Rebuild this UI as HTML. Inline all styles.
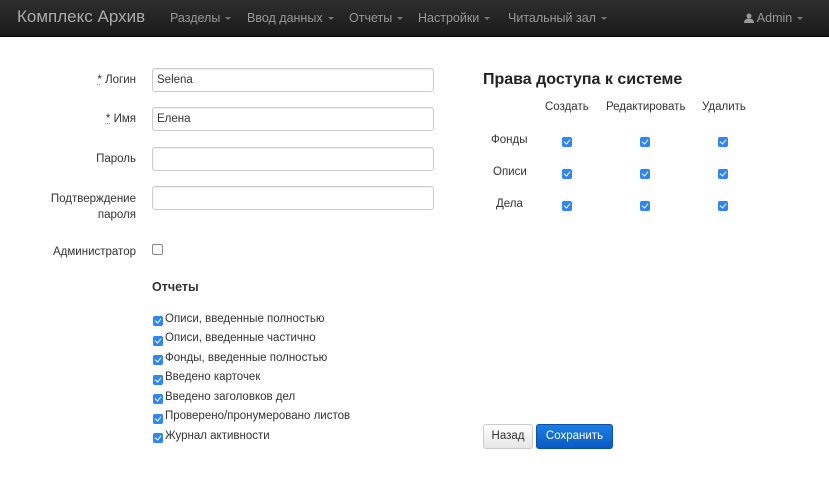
<!DOCTYPE html><html><head><meta charset="utf-8"><style>
body{margin:0;width:829px;height:500px;background:#fff;font-family:"Liberation Sans",sans-serif;font-size:11.5px;color:#333;position:relative;overflow:hidden}
.nav{position:absolute;left:0;top:0;width:829px;height:36px;background:linear-gradient(#2e2e2e,#1a1a1a);border-bottom:1px solid #000}
.nav span{position:absolute;top:11px;color:#999;font-size:12.5px}
.brand{color:#aaa!important;font-size:17px!important;top:7px!important}
.c{display:inline-block;width:0;height:0;border-left:3px solid transparent;border-right:3px solid transparent;border-top:3px solid #777;vertical-align:middle;margin-left:5px}
.a{position:absolute}
.lbl{position:absolute;right:693px;text-align:right;font-size:11.5px;color:#333}
.in{position:absolute;left:152px;width:276px;height:22px;border:1px solid #ccc;border-radius:3px;font-size:11.5px;line-height:22px;padding-left:4px;box-sizing:content-box;box-shadow:inset 0 1px 1px rgba(0,0,0,.08)}
.cb{position:absolute;width:10px;height:10px;border-radius:2px;background:#2f86f0}
.cb::after{content:"";position:absolute;left:3px;top:1px;width:3px;height:5px;border:solid #fff;border-width:0 1.5px 1.5px 0;transform:rotate(40deg)}
.ri{position:absolute;left:165px;font-size:11.5px}
.star{text-decoration:underline dotted #999}
</style></head><body>
<div class="nav">
<span class="brand" style="left:17px">Комплекс Архив</span>
<span style="left:170px">Разделы<i class="c"></i></span>
<span style="left:247px">Ввод данных<i class="c"></i></span>
<span style="left:349px">Отчеты<i class="c"></i></span>
<span style="left:418px">Настройки<i class="c"></i></span>
<span style="left:508px">Читальный зал<i class="c"></i></span>
<span style="left:744px"><svg width="10" height="10" viewBox="0 0 10 10" style="vertical-align:-1px"><circle cx="5" cy="3" r="2.5" fill="#999"/><path d="M0 10 Q0 5.5 5 5.5 Q10 5.5 10 10Z" fill="#999"/></svg> Admin<i class="c"></i></span>
</div>
<div class="lbl" style="top:74px"><span class="star">*</span> Логин</div>
<div class="lbl" style="top:113px"><span class="star">*</span> Имя</div>
<div class="lbl" style="top:153px">Пароль</div>
<div class="lbl" style="top:191px;line-height:16px">Подтверждение<br>пароля</div>
<div class="lbl" style="top:246px">Администратор</div>
<div class="in" style="top:68px">Selena</div>
<div class="in" style="top:107px">Елена</div>
<div class="in" style="top:147px"></div>
<div class="in" style="top:186px"></div>
<div class="a" style="left:152px;top:244px;width:9px;height:9px;border:1px solid #888;border-radius:2px"></div>
<div class="a" style="left:152px;top:280px;font-weight:bold;font-size:12.5px">Отчеты</div>
<div class="cb" style="left:153px;top:316px"></div><div class="ri" style="top:313px">Описи, введенные полностью</div>
<div class="cb" style="left:153px;top:336px"></div><div class="ri" style="top:332px">Описи, введенные частично</div>
<div class="cb" style="left:153px;top:355px"></div><div class="ri" style="top:352px">Фонды, введенные полностью</div>
<div class="cb" style="left:153px;top:375px"></div><div class="ri" style="top:371px">Введено карточек</div>
<div class="cb" style="left:153px;top:394px"></div><div class="ri" style="top:391px">Введено заголовков дел</div>
<div class="cb" style="left:153px;top:414px"></div><div class="ri" style="top:410px">Проверено/пронумеровано листов</div>
<div class="cb" style="left:153px;top:433px"></div><div class="ri" style="top:430px">Журнал активности</div>
<div class="a" style="left:483px;top:71px;font-weight:bold;font-size:16px;color:#222">Права доступа к системе</div>
<div class="a" style="left:545px;top:101px">Создать</div>
<div class="a" style="left:606px;top:101px">Редактировать</div>
<div class="a" style="left:702px;top:101px">Удалить</div>
<div class="a" style="left:491px;top:134px">Фонды</div>
<div class="a" style="left:493px;top:166px">Описи</div>
<div class="a" style="left:496px;top:198px">Дела</div>
<div class="cb" style="left:562px;top:137px"></div><div class="cb" style="left:640px;top:137px"></div><div class="cb" style="left:718px;top:137px"></div>
<div class="cb" style="left:562px;top:169px"></div><div class="cb" style="left:640px;top:169px"></div><div class="cb" style="left:718px;top:169px"></div>
<div class="cb" style="left:562px;top:201px"></div><div class="cb" style="left:640px;top:201px"></div><div class="cb" style="left:718px;top:201px"></div>
<div class="a" style="left:483px;top:424px;width:48px;height:23px;border:1px solid #ccc;border-radius:3px;background:linear-gradient(#fff,#e6e6e6);text-align:center;line-height:23px">Назад</div>
<div class="a" style="left:536px;top:424px;width:75px;height:23px;border:1px solid #0c4fa8;border-radius:3px;background:linear-gradient(#1b7fe0,#0a5ac4);color:#fff;text-align:center;line-height:23px">Сохранить</div>
</body></html>
